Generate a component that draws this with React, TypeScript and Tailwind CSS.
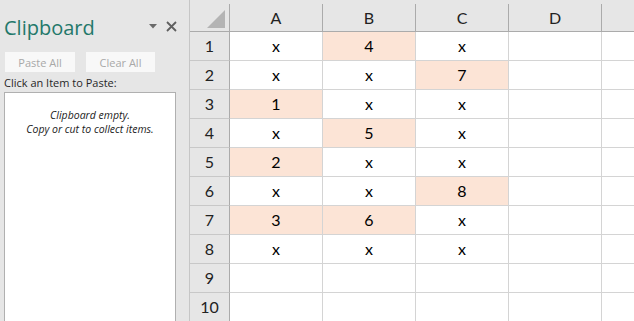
import React from 'react';

const ui = { fontFamily: '"Open Sans", "Noto Sans", sans-serif' };
const cellFont = { fontFamily: 'Lato, "Liberation Sans", sans-serif' };

const cols = ['A', 'B', 'C', 'D'];

// cell values per row: [A, B, C]; null = empty
const rows: (string | null)[][] = [
  ['x', '4', 'x'],
  ['x', 'x', '7'],
  ['1', 'x', 'x'],
  ['x', '5', 'x'],
  ['2', 'x', 'x'],
  ['x', 'x', '8'],
  ['3', '6', 'x'],
  ['x', 'x', 'x'],
  [null, null, null],
  [null, null, null],
];

function isNumber(v: string | null) {
  return v != null && v !== 'x';
}

function ClipboardPane() {
  return (
    <aside
      className="w-[190px] shrink-0 flex flex-col border-r border-[#c6c6c6] bg-[#e6e6e6]"
      style={ui}
    >
      {/* Title bar */}
      <div className="h-[52px] flex items-start justify-between pl-[4px] pr-[12px] pt-[14px]">
        <span className="text-[20px] leading-[28px] text-[#23786a] font-normal">
          Clipboard
        </span>
        <div className="flex items-center gap-[9px] pt-[7px]">
          <svg width="8" height="5" viewBox="0 0 8 5">
            <polygon points="0,0 8,0 4,4.5" fill="#6a6a6a" />
          </svg>
          <svg width="11" height="11" viewBox="0 0 11 11">
            <path d="M1 1 L10 10 M10 1 L1 10" stroke="#5f5f5f" strokeWidth="1.8" />
          </svg>
        </div>
      </div>

      {/* Buttons */}
      <div className="flex gap-[11px] pl-[5px]">
        <button className="w-[70px] h-[20px] bg-[#f8f8f8] text-[11px] text-[#a8a8a8] leading-none">
          Paste All
        </button>
        <button className="w-[69px] h-[20px] bg-[#f8f8f8] text-[11px] text-[#a8a8a8] leading-none">
          Clear All
        </button>
      </div>

      <div className="pl-[4px] pt-[2px] text-[11px] leading-[18px] text-[#262626]">
        Click an Item to Paste:
      </div>

      {/* Item list */}
      <div className="ml-[4px] w-[172px] flex-1 border border-b-0 border-[#b0b0b0] bg-white">
        <div className="pt-[15px] text-center italic text-[10.5px] leading-[14px] text-[#222]">
          <div>Clipboard empty.</div>
          <div>Copy or cut to collect items.</div>
        </div>
      </div>
    </aside>
  );
}

function Sheet() {
  return (
    <div className="flex-1 min-w-0 flex flex-col bg-white overflow-hidden">
      {/* column header row */}
      <div className="flex shrink-0 bg-[#e6e6e6] pt-[4px]">
        <div className="w-[40px] h-[28px] shrink-0 relative border-r border-b border-[#ababab]">
          <svg className="absolute right-[4px] bottom-[3px]" width="18" height="18" viewBox="0 0 18 18">
            <polygon points="18,0 18,18 0,18" fill="#b4b4b4" />
          </svg>
        </div>
        {cols.map((c) => (
          <div
            key={c}
            className="w-[93px] h-[28px] shrink-0 flex items-center justify-center border-r border-b border-[#ababab] text-[16px] text-[#222]"
            style={cellFont}
          >
            {c}
          </div>
        ))}
        <div className="flex-1 h-[28px] border-b border-[#ababab]" />
      </div>

      {rows.map((r, i) => (
        <div key={i} className="flex shrink-0">
          <div
            className="w-[40px] h-[29px] shrink-0 flex items-center justify-center bg-[#e6e6e6] border-r border-b border-r-[#ababab] border-b-[#c8c8c8] text-[16px] text-[#222]"
            style={cellFont}
          >
            {i + 1}
          </div>
          {[0, 1, 2, 3].map((j) => {
            const v = j < 3 ? r[j] : null;
            return (
              <div
                key={j}
                className={`w-[93px] h-[29px] shrink-0 flex items-center justify-center border-r border-b border-[#d4d4d4] text-[16px] text-black ${
                  isNumber(v) ? 'bg-[#fce4d6]' : 'bg-white'
                }`}
                style={cellFont}
              >
                {v}
              </div>
            );
          })}
          <div className="flex-1 h-[29px] border-b border-[#d4d4d4]" />
        </div>
      ))}
    </div>
  );
}

export default function App() {
  return (
    <div className="w-[634px] h-[321px] flex overflow-hidden bg-[#e6e6e6]">
      <ClipboardPane />
      <Sheet />
    </div>
  );
}
